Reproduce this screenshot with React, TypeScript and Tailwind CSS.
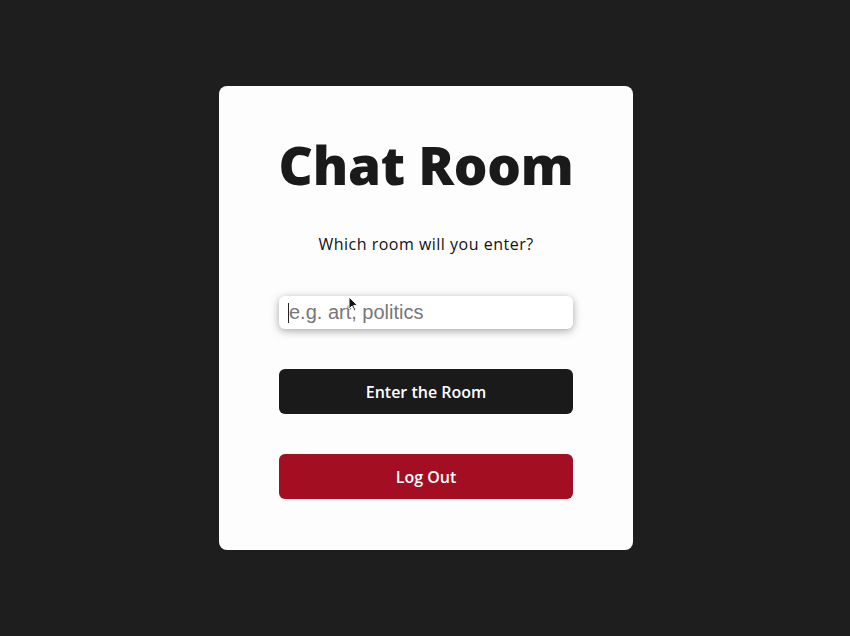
import { useState } from "react";

const poppins = { fontFamily: "'Open Sans', 'Noto Sans', sans-serif" };

function Pointer() {
  return (
    <svg
      className="pointer-events-none absolute left-[348px] top-[296px] h-[16px] w-[11px]"
      viewBox="0 0 11 16"
    >
      <path d="M1 1 L1 13 L4 10 L6.5 15 L8 14.3 L5.6 9.4 L9.6 9.4 Z" fill="#111" stroke="#fff" strokeWidth="1" />
    </svg>
  );
}

export default function App() {
  const [room, setRoom] = useState("");

  return (
    <div
      className="relative flex h-[636px] w-[850px] items-center justify-center bg-[#1e1e1e]"
      style={poppins}
    >
      <div className="ml-[2px] flex h-[464px] w-[414px] flex-col items-stretch rounded-[8px] bg-[#fdfdfd] px-[60px] pt-[47px] pb-[50px]">
        <h1 className="-mx-[20px] whitespace-nowrap text-center text-[53px] font-extrabold leading-[64px] tracking-[-0.3px] text-[#1a1a1a]">
          Chat Room
        </h1>
        <p className="mt-[35px] whitespace-nowrap text-center text-[16px] leading-[24px] tracking-[0.5px] text-[#111]">
          Which room will you enter?
        </p>
        <div className="relative mt-[40px] shrink-0">
          <input
            value={room}
            onChange={(e) => setRoom(e.target.value)}
            placeholder="e.g. art, politics"
            className="h-[33px] w-full rounded-[6px] bg-white pl-[10px] text-[20px] text-[#333] shadow-[0_2px_8px_rgba(0,0,0,0.35)] outline-none placeholder:text-[#777]"
            style={{ fontFamily: "'Liberation Sans', Arial, sans-serif" }}
          />
          <span className="absolute left-[9px] top-[7px] h-[20px] w-[1px] bg-[#222]" />
        </div>
        <button className="mt-[40px] h-[45px] w-full shrink-0 rounded-[6px] bg-[#1a1a1a] text-[16px] font-semibold text-white">
          Enter the Room
        </button>
        <button className="mt-[40px] h-[45px] w-full shrink-0 rounded-[6px] bg-[#a30e22] text-[16px] font-semibold text-white">
          Log Out
        </button>
      </div>
      <Pointer />
    </div>
  );
}
